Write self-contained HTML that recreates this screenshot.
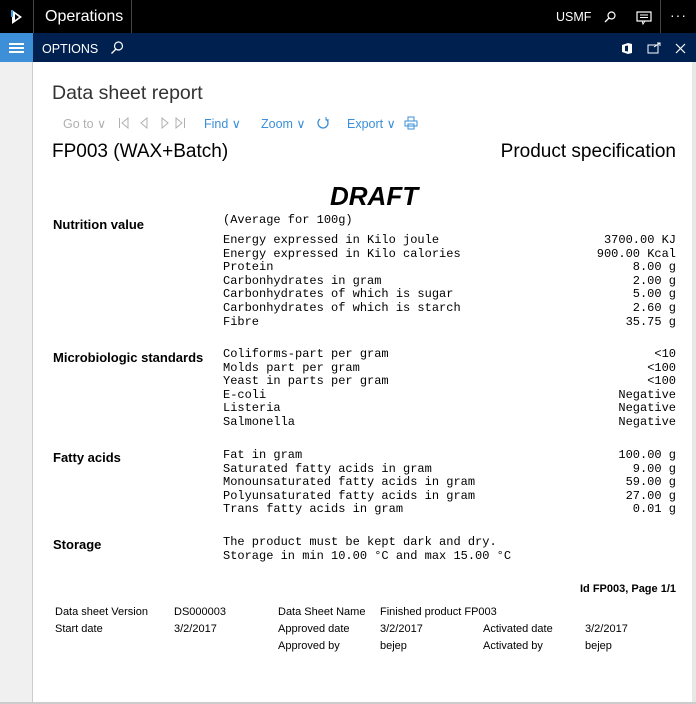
<!DOCTYPE html>
<html><head><style>
*{margin:0;padding:0;box-sizing:border-box}
body{width:696px;height:704px;overflow:hidden;background:#fff;font-family:"Liberation Sans",sans-serif;position:relative}
.a{position:absolute;white-space:nowrap}
.m{font-family:"Liberation Mono",monospace;font-size:12px;color:#000;line-height:13.6px}
.lab{font-weight:bold;font-size:13px;color:#000}
.f{font-size:11px;color:#000}
.tb{font-size:12.5px;color:#3a8fd8}
.tg{font-size:12.5px;color:#b0b0b0}
</style></head><body>
<div class="a" style="left:0;top:0;width:696px;height:33px;background:#000"></div>
<div class="a" style="left:33px;top:0;width:1px;height:33px;background:#444"></div>
<div class="a" style="left:131px;top:0;width:1px;height:33px;background:#444"></div>
<div class="a" style="left:660px;top:0;width:1px;height:33px;background:#444"></div>
<svg class="a" style="left:10px;top:9px" width="14" height="16" viewBox="0 0 14 16"><path d="M2 1 L12 8 L2 15 Z M5 5 L5 11 L9 8 Z" fill="#fff" fill-rule="evenodd"/><path d="M2 1 L2 8" stroke="#3aa0e8" stroke-width="2"/></svg>
<div class="a" style="left:45px;top:8px;color:#fff;font-size:16px">Operations</div>
<div class="a" style="left:556px;top:10px;color:#fff;font-size:12.5px">USMF</div>
<svg class="a" style="left:604px;top:11px" width="12" height="12"><circle cx="7.5" cy="4.5" r="3.5" fill="none" stroke="#fff" stroke-width="1.2"/><path d="M5 7 L1 11" stroke="#fff" stroke-width="1.3"/></svg>
<svg class="a" style="left:636px;top:11px" width="16" height="14"><rect x="1" y="1" width="14" height="9" fill="none" stroke="#fff" stroke-width="1.2"/><path d="M4 4h8M4 6.5h8M6 10l1 3 2-3" stroke="#fff" fill="none"/></svg>
<div class="a" style="left:670px;top:7px;color:#fff;font-size:14px;letter-spacing:1px">···</div>
<div class="a" style="left:0;top:33px;width:696px;height:29px;background:#002050"></div>
<div class="a" style="left:0;top:33px;width:33px;height:29px;background:#3d8fd8"></div>
<div class="a" style="left:9px;top:43px;width:15px;height:1.5px;background:#fff;box-shadow:0 4px 0 #fff,0 8px 0 #fff"></div>
<div class="a" style="left:42px;top:42px;color:#fff;font-size:12.5px">OPTIONS</div>
<svg class="a" style="left:110px;top:41px" width="14" height="14"><circle cx="8.5" cy="5" r="4" fill="none" stroke="#fff" stroke-width="1.2"/><path d="M6 8 L1.5 12.5" stroke="#fff" stroke-width="1.3"/></svg>
<svg class="a" style="left:621px;top:42px" width="12" height="13"><path d="M1 3 L7 1 L11 2 L11 11 L7 12 L1 10 Z" fill="#fff"/><path d="M4 4 L7 3.5 L7 9.5 L4 9 Z" fill="#002050"/></svg>
<svg class="a" style="left:647px;top:42px" width="14" height="12"><rect x="1" y="3" width="10" height="8" fill="none" stroke="#fff"/><path d="M7 5 L13 1 M10 1h3v3" stroke="#fff" fill="none"/></svg>
<svg class="a" style="left:675px;top:43px" width="11" height="11"><path d="M1 1L10 10M10 1L1 10" stroke="#fff" stroke-width="1.2"/></svg>
<div class="a" style="left:0;top:62px;width:33px;height:642px;background:#f0f0f0;border-right:1px solid #ccc"></div>
<div class="a" style="left:692px;top:62px;width:4px;height:642px;background:#e8e8e8"></div>
<div class="a" style="left:0;top:702px;width:696px;height:2px;background:#ccc"></div>
<div class="a" style="left:52px;top:82px;font-size:19.5px;color:#333">Data sheet report</div>
<div class="a tg" style="left:63px;top:116px">Go to ∨</div>
<svg class="a" style="left:118px;top:117px" width="72" height="12" fill="none" stroke="#b0b0b0" stroke-width="1"><path d="M1.5 1v10M10 1L4 6l6 5Z"/><path d="M29 1L23 6l6 5Z"/><path d="M44 1l6 5-6 5Z"/><path d="M58 1l6 5-6 5ZM66.5 1v10"/></svg>
<div class="a tb" style="left:204px;top:116px">Find ∨</div>
<div class="a tb" style="left:261px;top:116px">Zoom ∨</div>
<svg class="a" style="left:316px;top:116px" width="14" height="14"><path d="M10 3 A5 5 0 1 1 4 3" fill="none" stroke="#3a8fd8" stroke-width="1.3"/><path d="M10 1 L10 4 L13 4" fill="none" stroke="#3a8fd8"/></svg>
<div class="a tb" style="left:347px;top:116px">Export ∨</div>
<svg class="a" style="left:404px;top:116px" width="14" height="14"><rect x="1" y="5" width="12" height="5" fill="none" stroke="#3a8fd8"/><rect x="4" y="1" width="6" height="4" fill="none" stroke="#3a8fd8"/><rect x="4" y="8" width="6" height="5" fill="none" stroke="#3a8fd8"/></svg>
<div class="a" style="left:52px;top:141px;font-size:19px;color:#000">FP003 (WAX+Batch)</div>
<div class="a" style="right:20px;top:141px;font-size:19px;color:#000">Product specification</div>
<div class="a" style="left:330px;top:181px;font-size:26px;font-weight:bold;font-style:italic;color:#000">DRAFT</div>

<div class="a lab" style="left:53px;top:217px">Nutrition value</div>
<div class="a m" style="left:223px;top:214px">(Average for 100g)</div>
<div class="a m" style="left:223px;top:234px">Energy expressed in Kilo joule<br>Energy expressed in Kilo calories<br>Protein<br>Carbonhydrates in gram<br>Carbonhydrates of which is sugar<br>Carbonhydrates of which is starch<br>Fibre</div>
<div class="a m" style="right:20px;top:234px;text-align:right">3700.00 KJ<br>900.00 Kcal<br>8.00 g<br>2.00 g<br>5.00 g<br>2.60 g<br>35.75 g</div>

<div class="a lab" style="left:53px;top:350px">Microbiologic standards</div>
<div class="a m" style="left:223px;top:348px">Coliforms-part per gram<br>Molds part per gram<br>Yeast in parts per gram<br>E-coli<br>Listeria<br>Salmonella</div>
<div class="a m" style="right:20px;top:348px;text-align:right">&lt;10<br>&lt;100<br>&lt;100<br>Negative<br>Negative<br>Negative</div>

<div class="a lab" style="left:53px;top:450px">Fatty acids</div>
<div class="a m" style="left:223px;top:449px">Fat in gram<br>Saturated fatty acids in gram<br>Monounsaturated fatty acids in gram<br>Polyunsaturated fatty acids in gram<br>Trans fatty acids in gram</div>
<div class="a m" style="right:20px;top:449px;text-align:right">100.00 g<br>9.00 g<br>59.00 g<br>27.00 g<br>0.01 g</div>

<div class="a lab" style="left:53px;top:537px">Storage</div>
<div class="a m" style="left:223px;top:536px">The product must be kept dark and dry.<br>Storage in min 10.00 °C and max 15.00 °C</div>

<div class="a f" style="right:20px;top:583px;font-weight:bold">Id FP003, Page 1/1</div>
<div class="a f" style="left:55px;top:606px">Data sheet Version</div>
<div class="a f" style="left:174px;top:606px">DS000003</div>
<div class="a f" style="left:278px;top:606px">Data Sheet Name</div>
<div class="a f" style="left:380px;top:606px">Finished product FP003</div>
<div class="a f" style="left:55px;top:623px">Start date</div>
<div class="a f" style="left:174px;top:623px">3/2/2017</div>
<div class="a f" style="left:278px;top:623px">Approved date</div>
<div class="a f" style="left:380px;top:623px">3/2/2017</div>
<div class="a f" style="left:483px;top:623px">Activated date</div>
<div class="a f" style="left:585px;top:623px">3/2/2017</div>
<div class="a f" style="left:278px;top:640px">Approved by</div>
<div class="a f" style="left:380px;top:640px">bejep</div>
<div class="a f" style="left:483px;top:640px">Activated by</div>
<div class="a f" style="left:585px;top:640px">bejep</div>
</body></html>
